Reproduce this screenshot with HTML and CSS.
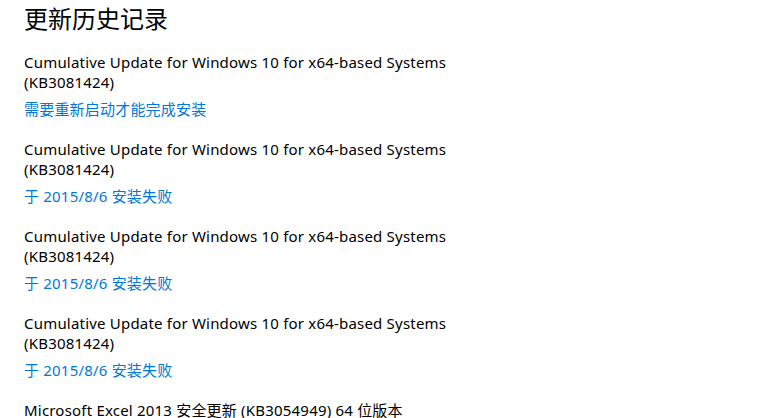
FILE: index.html
```html
<!DOCTYPE html>
<html lang="zh-CN">
<head>
    <meta charset="UTF-8">
    <meta name="viewport" content="width=device-width, initial-scale=1.0">
    <title>更新历史记录</title>
    <link rel="stylesheet" href="styles.css">
</head>
<body>
    <div class="page">
        <h1 class="page-title">更新历史记录</h1>
        <div class="update-list">
            <div class="update-item">
                <div class="update-name">Cumulative Update for Windows 10 for x64-based Systems<br>(KB3081424)</div>
                <a class="update-status" href="#">需要重新启动才能完成安装</a>
            </div>
            <div class="update-item">
                <div class="update-name">Cumulative Update for Windows 10 for x64-based Systems<br>(KB3081424)</div>
                <a class="update-status" href="#">于 2015/8/6 安装失败</a>
            </div>
            <div class="update-item">
                <div class="update-name">Cumulative Update for Windows 10 for x64-based Systems<br>(KB3081424)</div>
                <a class="update-status" href="#">于 2015/8/6 安装失败</a>
            </div>
            <div class="update-item">
                <div class="update-name">Cumulative Update for Windows 10 for x64-based Systems<br>(KB3081424)</div>
                <a class="update-status" href="#">于 2015/8/6 安装失败</a>
            </div>
            <div class="update-item">
                <div class="update-name">Microsoft Excel 2013 安全更新 (KB3054949) 64 位版本</div>
            </div>
        </div>
    </div>
</body>
</html>
```

FILE: styles.css
```css
body, html {
    margin: 0;
    padding: 0;
    background-color: #fff;
    overflow: hidden;
}

.page {
    padding: 3px 24px 0;
    font-family: "Noto Sans", "Noto Sans CJK SC", sans-serif;
    color: #000;
}

.page-title {
    margin: 0;
    font-size: 24px;
    font-weight: normal;
    line-height: 32px;
}

.update-list {
    display: flex;
    flex-direction: column;
    gap: 20px;
    margin-top: 17px;
}

.update-item {
    display: flex;
    flex-direction: column;
    align-items: flex-start;
    font-size: 15px;
    line-height: 20px;
    letter-spacing: 0.2px;
}

.update-status {
    margin-top: 7px;
    color: #0078d7;
    text-decoration: none;
}
```
